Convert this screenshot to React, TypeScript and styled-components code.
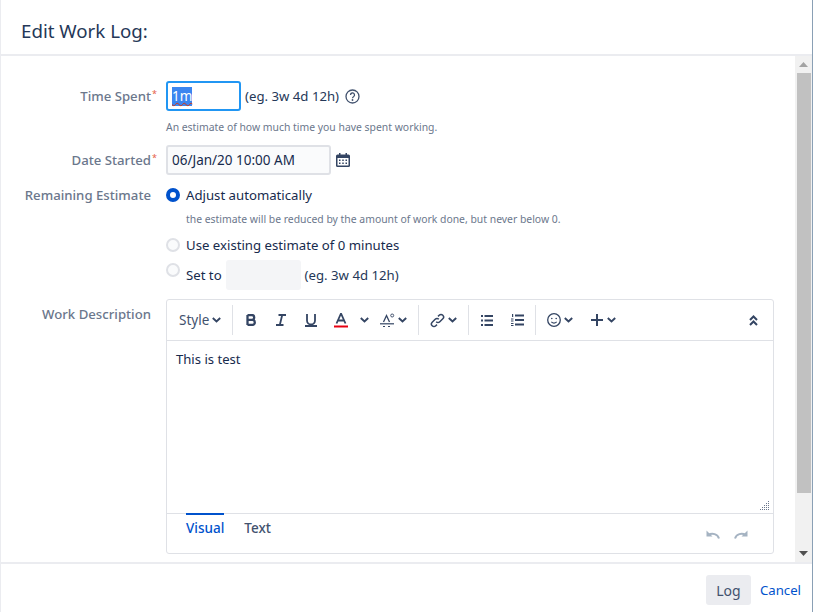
import { ReactNode } from 'react';
import styled, { createGlobalStyle } from 'styled-components';

const GlobalStyle = createGlobalStyle`
    html, body {
        margin: 0;
        padding: 0;
        background: white;
    }

    body {
        font-family: "Noto Sans", "Liberation Sans", sans-serif;
        font-size: 13.2px;
        color: #172b4d;
    }
`;

const Dialog = styled.div`
    display: flex;
    flex-direction: column;
    width: 813px;
    height: 612px;
    box-sizing: border-box;
    border-left: 1px solid #ebecf0;
    border-right: 1px solid #8aa0b5;
    overflow: hidden;
    background: white;
`;

const Header = styled.header`
    display: flex;
    align-items: center;
    flex: none;
    box-sizing: border-box;
    height: 56px;
    padding: 6px 20px 0;
    border-bottom: 2px solid #ebecf0;
`;

const Title = styled.h2`
    margin: 0;
    font-size: 18.7px;
    font-weight: 400;
    color: #253858;
`;

const Body = styled.div`
    display: flex;
    flex: none;
    height: 506px;
`;

const Form = styled.div`
    flex: 1;
    padding-top: 25px;
    padding-right: 21px;
`;

const Row = styled.div<{ $mb?: number; $h: number }>`
    display: grid;
    grid-template-columns: 150px 1fr;
    column-gap: 15px;
    min-height: ${(p) => p.$h}px;
    margin-bottom: ${(p) => p.$mb ?? 0}px;
`;

const Label = styled.label<{ $h?: number }>`
    position: relative;
    display: flex;
    align-items: center;
    justify-content: flex-end;
    height: ${(p) => p.$h ?? 30}px;
    font-weight: 500;
    font-size: 13.2px;
    color: #6b778c;
    white-space: nowrap;
`;

const Star = styled.span`
    position: absolute;
    left: 151px;
    top: 8px;
    color: #e5604a;
    font-size: 9px;
    font-weight: 400;
    line-height: 1;
`;

const Field = styled.div`
    display: flex;
    align-items: center;
    height: 30px;
`;

const TimeInput = styled.div`
    display: flex;
    align-items: center;
    box-sizing: border-box;
    width: 75px;
    height: 30px;
    padding: 0 4px;
    border: 2px solid #2196f3;
    border-radius: 3px;
    font-size: 13.5px;
`;

const Selected = styled.span`
    background: #3b86f0;
    color: white;
    text-decoration: underline wavy #de350b 1px;
    line-height: 19px;
`;

const DateInput = styled.div`
    display: flex;
    align-items: center;
    box-sizing: border-box;
    width: 165px;
    height: 30px;
    padding: 0 4px;
    border: 2px solid #dfe1e6;
    border-radius: 3px;
    background: #fafbfc;
    font-size: 13.5px;
`;

const Example = styled.span`
    margin-left: 4px;
    color: #253858;
    white-space: nowrap;
`;

const HelpIcon = styled.svg`
    margin-left: 6px;
    color: #42526e;
`;

const CalendarIcon = styled.svg`
    margin-left: 5px;
    color: #344563;
`;

const Hint = styled.div`
    font-size: 10.4px;
    line-height: 15px;
    color: #6b778c;
`;

const TimeHint = styled(Hint)`
    margin-top: 9px;
`;

const RadioRow = styled.div<{ $h?: number; $mt?: number }>`
    display: flex;
    align-items: center;
    height: ${(p) => p.$h ?? 20}px;
    margin-top: ${(p) => p.$mt ?? 0}px;
`;

const Radio = styled.span<{ $on?: boolean }>`
    flex: none;
    box-sizing: border-box;
    width: 14px;
    height: 14px;
    margin-right: 6px;
    border-radius: 50%;
    background: ${(p) => (p.$on ? 'white' : '#fafbfc')};
    border: ${(p) => (p.$on ? '4px solid #0052cc' : '2px solid #dfe1e6')};
`;

const RaisedRadio = styled(Radio)`
    align-self: flex-start;
    margin-top: 3px;
`;

const RadioHint = styled(Hint)`
    margin: 7px 0 0 20px;
`;

const SetToInput = styled.div`
    width: 75px;
    height: 30px;
    margin-left: 4px;
    border-radius: 3px;
    background: #f4f5f7;
`;

const Editor = styled.div`
    display: flex;
    flex-direction: column;
    box-sizing: border-box;
    height: 255px;
    border: 1px solid #dfe1e6;
    border-radius: 3px;
`;

const Toolbar = styled.div`
    display: flex;
    align-items: center;
    flex: none;
    height: 40px;
    padding: 0 12px;
    border-bottom: 1px solid #dfe1e6;
`;

const Group = styled.div<{ $pad?: number }>`
    display: flex;
    align-items: center;
    height: 30px;
    padding-right: ${(p) => p.$pad ?? 11}px;
    margin-right: 3px;
    border-right: 1px solid #dfe1e6;
`;

const LastGroup = styled.div`
    display: flex;
    align-items: center;
    flex: 1;
    height: 30px;
`;

const ToolButton = styled.span<{ $w: number; $ml?: number }>`
    display: flex;
    align-items: center;
    justify-content: center;
    flex: none;
    width: ${(p) => p.$w}px;
    height: 24px;
    margin-left: ${(p) => p.$ml ?? 0}px;
    color: #344563;
`;

const StyleLabel = styled.span`
    color: #42526e;
    font-size: 13.5px;
`;

const EditorText = styled.div`
    flex: 1;
    position: relative;
    padding: 9px;
    line-height: 19px;
    font-size: 13.1px;
    color: #172b4d;
`;

const Grip = styled.svg`
    position: absolute;
    right: 3px;
    bottom: 2px;
`;

const Tabs = styled.div`
    display: flex;
    align-items: flex-start;
    flex: none;
    height: 39px;
    padding: 0 19px;
    border-top: 1px solid #dfe1e6;
`;

const Tab = styled.span<{ $active?: boolean }>`
    margin-right: 20px;
    padding-top: 3px;
    margin-top: -1px;
    line-height: 20px;
    font-weight: 500;
    font-size: 13.5px;
    color: ${(p) => (p.$active ? '#0052cc' : '#42526e')};
    border-top: 2px solid ${(p) => (p.$active ? '#0052cc' : 'transparent')};
`;

const History = styled.div`
    display: flex;
    gap: 14px;
    margin-left: auto;
    margin-top: 16px;
    margin-right: 5px;
    color: #a5b3c2;
`;

const Scrollbar = styled.div`
    display: flex;
    flex-direction: column;
    align-items: center;
    flex: none;
    width: 17px;
    background: #f1f1f1;
`;

const ScrollArrow = styled.div`
    display: flex;
    align-items: center;
    justify-content: center;
    flex: none;
    height: 17px;
`;

const Thumb = styled.div`
    flex: none;
    width: 14px;
    height: 420px;
    background: #c1c1c1;
`;

const ScrollSpacer = styled.div`
    flex: 1;
`;

const Footer = styled.footer`
    display: flex;
    align-items: center;
    justify-content: flex-end;
    flex: 1;
    padding: 4px 11px 0 0;
    border-top: 2px solid #ebecf0;
`;

const LogButton = styled.span`
    display: flex;
    align-items: center;
    justify-content: center;
    width: 45px;
    height: 30px;
    border-radius: 3px;
    background: #ebecf0;
    color: #42526e;
    font-size: 14px;
`;

const CancelLink = styled.a`
    margin-left: 9px;
    margin-top: -1px;
    color: #0052cc;
`;

const Chevron = () => (
    <svg width="9" height="6" viewBox="0 0 9 6" fill="none" stroke="currentColor" strokeWidth="1.900">
        <path d="M.8 1l3.700 3.400L8.200 1" />
    </svg>
);

const Tool = ({ w, ml, children }: { w: number; ml?: number; children: ReactNode }) => (
    <ToolButton $w={w} $ml={ml}>{children}</ToolButton>
);

const Bold = () => (
    <svg width="11" height="12" viewBox="0 0 11 12" fill="none" stroke="currentColor" strokeWidth="2.300">
        <path d="M1.500 1.100v9.800M1.500 1.100h4.300a2.400 2.400 0 0 1 0 4.800H1.500m0 0h4.800a2.500 2.500 0 0 1 0 5H1.500" />
    </svg>
);

const Italic = () => (
    <svg width="10" height="12" viewBox="0 0 10 12" fill="none" stroke="currentColor" strokeWidth="1.800">
        <path d="M2.500 1h7.500M0 11h7.500M6.200 1L3.800 11" />
    </svg>
);

const Underline = () => (
    <svg width="12" height="13" viewBox="0 0 12 13" fill="none" stroke="currentColor" strokeWidth="1.800">
        <path d="M2 0v6.500a4 4 0 0 0 8 0V0M0 12h12" />
    </svg>
);

const TextColor = () => (
    <svg width="14" height="15" viewBox="0 0 14 15" fill="none">
        <path d="M2.500 10.500L7 .5l4.500 10M4 7.500h6" stroke="currentColor" strokeWidth="1.800" />
        <path d="M0 13.500h14" stroke="#e60012" strokeWidth="2" />
    </svg>
);

const MoreFormat = () => (
    <svg width="15" height="15" viewBox="0 0 15 15" fill="none" stroke="currentColor">
        <path d="M3.500 9L6.500 2.500 9.500 9" strokeWidth="1.300" />
        <circle cx="12.200" cy="2.500" r="1.500" strokeWidth=".9" />
        <path d="M0 10.800h14" strokeWidth="1.200" />
        <path d="M3 13.500h2M8 13.500h2" strokeWidth="1.200" />
    </svg>
);

const LinkIcon = () => (
    <svg width="15" height="15" viewBox="0 0 15 15" fill="none" stroke="currentColor" strokeWidth="1.500">
        <path d="M6.200 8.800a2.500 2.500 0 0 0 3.600 0l3-3a2.500 2.500 0 0 0-3.600-3.600L8 3.400" />
        <path d="M8.800 6.200a2.500 2.500 0 0 0-3.600 0l-3 3a2.500 2.500 0 0 0 3.600 3.600L7 11.600" />
    </svg>
);

const BulletList = () => (
    <svg width="12" height="11" viewBox="0 0 12 11" fill="currentColor">
        <rect x="0" y="0" width="2" height="2" />
        <rect x="3.500" y="0" width="8.500" height="2" />
        <rect x="0" y="4.500" width="2" height="2" />
        <rect x="3.500" y="4.500" width="8.500" height="2" />
        <rect x="0" y="9" width="2" height="2" />
        <rect x="3.500" y="9" width="8.500" height="2" />
    </svg>
);

const NumberList = () => (
    <svg width="13" height="12" viewBox="0 0 13 12" fill="currentColor">
        <rect x="1" y="0" width="1.200" height="3" />
        <rect x="0" y="4.500" width="2.500" height="1" />
        <rect x="0" y="6.500" width="2.500" height="1" />
        <rect x="0" y="9" width="2.500" height="1" />
        <rect x="0" y="11" width="2.500" height="1" />
        <rect x="4" y="0.500" width="9" height="2" />
        <rect x="4" y="5" width="9" height="2" />
        <rect x="4" y="9.500" width="9" height="2" />
    </svg>
);

const Smile = () => (
    <svg width="14" height="14" viewBox="0 0 14 14" fill="none" stroke="currentColor">
        <circle cx="7" cy="7" r="6.300" strokeWidth="1.300" />
        <circle cx="4.800" cy="5.500" r=".8" fill="currentColor" stroke="none" />
        <circle cx="9.200" cy="5.500" r=".8" fill="currentColor" stroke="none" />
        <path d="M4.300 8.800c1.500 1.400 3.900 1.400 5.400 0" strokeWidth="1.100" />
    </svg>
);

const Plus = () => (
    <svg width="12" height="12" viewBox="0 0 12 12" stroke="currentColor" strokeWidth="2">
        <path d="M6 0v12M0 6h12" />
    </svg>
);

const Collapse = () => (
    <svg width="9" height="11" viewBox="0 0 9 11" fill="none" stroke="currentColor" strokeWidth="2">
        <path d="M1 5l3.500-3.500L8 5M1 10l3.500-3.500L8 10" />
    </svg>
);

const Undo = () => (
    <svg width="15" height="9" viewBox="0 0 15 9" fill="none" stroke="currentColor" strokeWidth="2">
        <path d="M14 8.500C12.500 4 7.500 2.500 3 5" />
        <path d="M1.500 .5v6h6" fill="currentColor" stroke="none" />
    </svg>
);

const Redo = () => (
    <svg width="15" height="9" viewBox="0 0 15 9" fill="none" stroke="currentColor" strokeWidth="2">
        <path d="M1 8.500C2.500 4 7.500 2.500 12 5" />
        <path d="M13.500 .5v6h-6" fill="currentColor" stroke="none" />
    </svg>
);

export default function App() {
    return (
        <Dialog>
            <GlobalStyle />
            <Header>
                <Title>Edit Work Log:</Title>
            </Header>

            <Body>
                <Form>
                    <Row $h={64}>
                        <Label>Time Spent<Star>*</Star></Label>
                        <div>
                            <Field>
                                <TimeInput><Selected>1m</Selected></TimeInput>
                                <Example>(eg. 3w 4d 12h)</Example>
                                <HelpIcon width="15" height="15" viewBox="0 0 15 15" fill="none" stroke="currentColor">
                                    <circle cx="7.500" cy="7.500" r="6.500" strokeWidth="1.300" />
                                    <path d="M5.500 6a2 2 0 1 1 3 1.700c-.7.4-1 .8-1 1.500" strokeWidth="1.300" />
                                    <circle cx="7.500" cy="11" r=".9" fill="currentColor" stroke="none" />
                                </HelpIcon>
                            </Field>
                            <TimeHint>An estimate of how much time you have spent working.</TimeHint>
                        </div>
                    </Row>

                    <Row $h={30} $mb={10}>
                        <Label>Date Started<Star>*</Star></Label>
                        <Field>
                            <DateInput>06/Jan/20 10:00 AM</DateInput>
                            <CalendarIcon width="14" height="14" viewBox="0 0 14 14">
                                <rect x="0" y="1.500" width="14" height="12.500" rx="1.500" fill="currentColor" />
                                <rect x="3" y="0" width="1.500" height="3" fill="currentColor" />
                                <rect x="9.500" y="0" width="1.500" height="3" fill="currentColor" />
                                <path d="M1.500 5h11v7.500h-11z" fill="white" />
                                <path
                                    d="M3 6.500h1.500V8H3zM6.250 6.500h1.500V8h-1.500zM9.500 6.500H11V8H9.500zM3 9.500h1.500V11H3zM6.250 9.500h1.500V11h-1.500zM9.500 9.500H11V11H9.500z"
                                    fill="currentColor"
                                />
                            </CalendarIcon>
                        </Field>
                    </Row>

                    <Row $h={20} $mb={9}>
                        <Label $h={20}>Remaining Estimate</Label>
                        <div>
                            <RadioRow><Radio $on />Adjust automatically</RadioRow>
                            <RadioHint>the estimate will be reduced by the amount of work done, but never below 0.</RadioHint>
                            <RadioRow $mt={8}><Radio />Use existing estimate of 0 minutes</RadioRow>
                            <RadioRow $h={30} $mt={5}>
                                <RaisedRadio />Set to<SetToInput /><Example>(eg. 3w 4d 12h)</Example>
                            </RadioRow>
                        </div>
                    </Row>

                    <Row $h={255}>
                        <Label $h={30}>Work Description</Label>
                        <Editor>
                            <Toolbar>
                                <Group>
                                    <StyleLabel>Style</StyleLabel>
                                    <Tool w={9} ml={3}><Chevron /></Tool>
                                </Group>
                                <Group>
                                    <Tool w={30}><Bold /></Tool>
                                    <Tool w={30}><Italic /></Tool>
                                    <Tool w={30}><Underline /></Tool>
                                    <Tool w={30}><TextColor /></Tool>
                                    <Tool w={9} ml={4}><Chevron /></Tool>
                                    <Tool w={24} ml={6}><MoreFormat /></Tool>
                                    <Tool w={9} ml={-1}><Chevron /></Tool>
                                </Group>
                                <Group>
                                    <Tool w={30}><LinkIcon /></Tool>
                                    <Tool w={9} ml={-4}><Chevron /></Tool>
                                </Group>
                                <Group $pad={3}>
                                    <Tool w={30}><BulletList /></Tool>
                                    <Tool w={30}><NumberList /></Tool>
                                </Group>
                                <LastGroup>
                                    <Tool w={30}><Smile /></Tool>
                                    <Tool w={9} ml={-5}><Chevron /></Tool>
                                    <Tool w={30} ml={9}><Plus /></Tool>
                                    <Tool w={9} ml={-5}><Chevron /></Tool>
                                </LastGroup>
                                <Tool w={16}><Collapse /></Tool>
                            </Toolbar>
                            <EditorText>
                                This is test
                                <Grip width="10" height="10" viewBox="0 0 10 10" fill="#6b778c">
                                    <rect x="8" y="0" width="1" height="1" />
                                    <rect x="6" y="2" width="1" height="1" />
                                    <rect x="8" y="2" width="1" height="1" />
                                    <rect x="4" y="4" width="1" height="1" />
                                    <rect x="6" y="4" width="1" height="1" />
                                    <rect x="8" y="4" width="1" height="1" />
                                    <rect x="2" y="6" width="1" height="1" />
                                    <rect x="4" y="6" width="1" height="1" />
                                    <rect x="6" y="6" width="1" height="1" />
                                    <rect x="8" y="6" width="1" height="1" />
                                    <rect x="0" y="8" width="1" height="1" />
                                    <rect x="2" y="8" width="1" height="1" />
                                    <rect x="4" y="8" width="1" height="1" />
                                    <rect x="6" y="8" width="1" height="1" />
                                    <rect x="8" y="8" width="1" height="1" />
                                </Grip>
                            </EditorText>
                            <Tabs>
                                <Tab $active>Visual</Tab>
                                <Tab>Text</Tab>
                                <History>
                                    <Undo />
                                    <Redo />
                                </History>
                            </Tabs>
                        </Editor>
                    </Row>
                </Form>

                <Scrollbar>
                    <ScrollArrow>
                        <svg width="9" height="5" viewBox="0 0 9 5" fill="#a3a3a3"><path d="M4.500 0L9 5H0z" /></svg>
                    </ScrollArrow>
                    <Thumb />
                    <ScrollSpacer />
                    <ScrollArrow>
                        <svg width="9" height="5" viewBox="0 0 9 5" fill="#505050"><path d="M0 0h9L4.500 5z" /></svg>
                    </ScrollArrow>
                </Scrollbar>
            </Body>

            <Footer>
                <LogButton>Log</LogButton>
                <CancelLink>Cancel</CancelLink>
            </Footer>
        </Dialog>
    );
}
